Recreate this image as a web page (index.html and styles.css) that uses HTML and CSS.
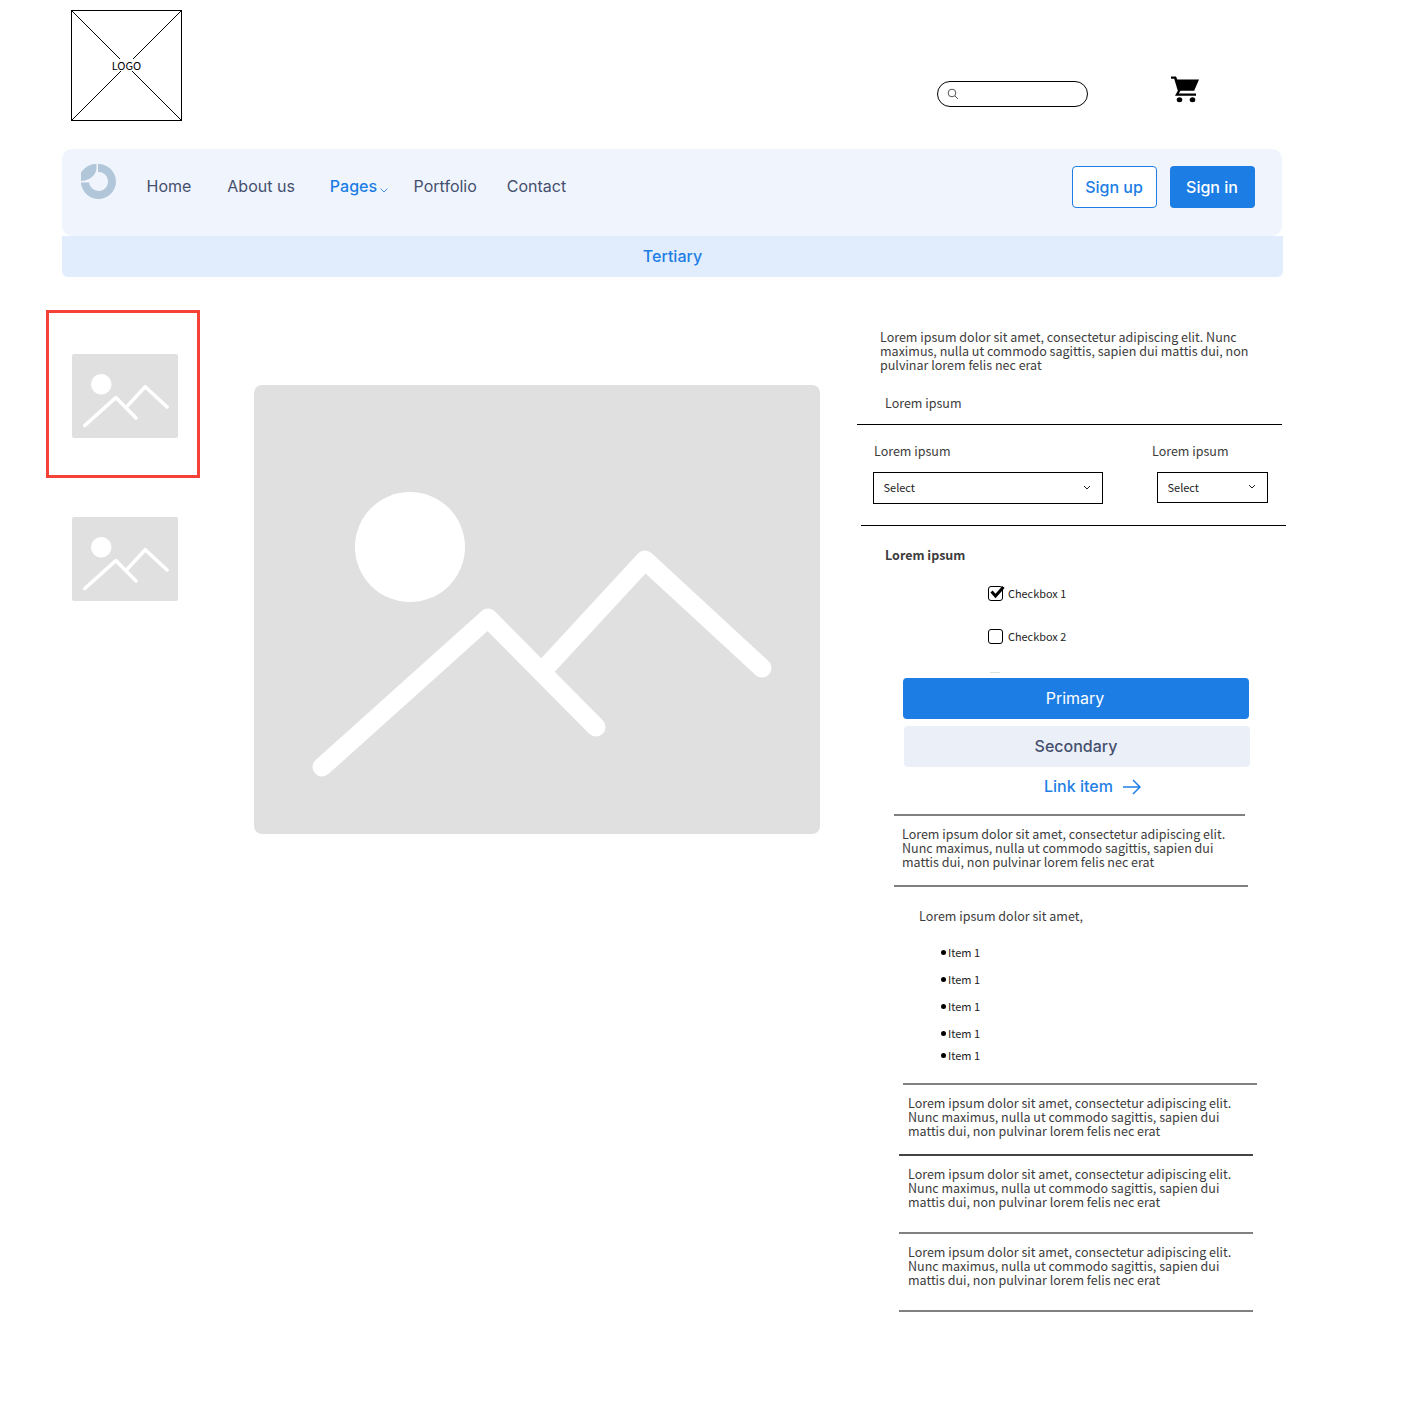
FILE: index.html
```html
<!DOCTYPE html>
<html lang="en">
<head>
  <meta charset="UTF-8">
  <title>Product page wireframe</title>
  <link rel="stylesheet" href="styles.css">
</head>
<body>

<svg class="defs" width="0" height="0">
  <symbol id="placeholder" viewBox="0 0 566 449">
    <circle cx="156" cy="162" r="55" fill="#fff"/>
    <path d="M68 382L234 233L342 342M294 280L391 175L508 283" fill="none" stroke="#fff" stroke-width="19" stroke-linecap="round" stroke-linejoin="round"/>
  </symbol>
</svg>

<header class="top">
  <div class="logo-box">
    <svg class="logo-cross" viewBox="0 0 110 110" preserveAspectRatio="none">
      <path d="M0 0L110 110M110 0L0 110" stroke="#000" stroke-width="1" fill="none"/>
    </svg>
    <span class="logo-text">LOGO</span>
  </div>
  <div class="search">
    <svg class="search-icon" viewBox="0 0 12 12">
      <circle cx="5" cy="5" r="3.8" fill="none" stroke="#555" stroke-width="1"/>
      <path d="M8 8L11 11" stroke="#555" stroke-width="1"/>
    </svg>
  </div>
  <svg class="cart" viewBox="0 0 28 30" preserveAspectRatio="none">
    <path d="M0 0.500H5L6.300 4H28L23.200 16.500H9.500L7.800 19.500H25V22H4L6.800 16.500L3.200 3H0Z" fill="#000"/>
    <circle cx="8.500" cy="26.500" r="2.800" fill="#000"/>
    <circle cx="21.500" cy="26.500" r="2.800" fill="#000"/>
  </svg>
</header>

<nav class="navbar">
  <svg class="nav-logo" viewBox="0.500 0.500 35 35">
    <path d="M17.500 0.500A17.500 17.500 0 1 1 0.500 19H8.600A9.500 9.500 0 1 0 17.500 8.500Z" fill="#b2c6da"/>
    <path d="M16 0.500V4.500C15.500 11 11 16.500 0.500 17.500V9C2 7 5 3.500 9 1.800C11 1 13.500 0.500 16 0.500Z" fill="#b2c6da"/>
  </svg>
  <a class="nav-link nav-home">Home</a>
  <a class="nav-link nav-about">About us</a>
  <a class="nav-link nav-pages">Pages</a>
  <svg class="nav-caret" viewBox="0 0 8 5"><path d="M0.500 0.500L4 4L7.500 0.500" fill="none" stroke="#1c7de4" stroke-width="0.800"/></svg>
  <a class="nav-link nav-portfolio">Portfolio</a>
  <a class="nav-link">Contact</a>
  <div class="nav-actions">
    <button class="btn-signup">Sign up</button>
    <button class="btn-signin">Sign in</button>
  </div>
</nav>
<div class="tertiary">Tertiary</div>

<main class="main">
  <div class="thumbs">
    <div class="thumb-active">
      <svg class="thumb-img"><use href="#placeholder"/></svg>
    </div>
    <svg class="thumb-img thumb-second"><use href="#placeholder"/></svg>
  </div>

  <svg class="hero-img"><use href="#placeholder"/></svg>

  <section class="details">
    <p class="txt intro">Lorem ipsum dolor sit amet, consectetur adipiscing elit. Nunc maximus, nulla ut commodo sagittis, sapien dui mattis dui, non pulvinar lorem felis nec erat</p>
    <p class="txt price">Lorem ipsum</p>
    <hr class="rule-black rule-a">

    <div class="selects">
      <div class="field field-wide">
        <label class="txt">Lorem ipsum</label>
        <div class="select select-wide">Select
          <svg class="chev" viewBox="0 0 8 5"><path d="M1 1L4 4L7 1" fill="none" stroke="#222" stroke-width="1"/></svg>
        </div>
      </div>
      <div class="field field-narrow">
        <label class="txt">Lorem ipsum</label>
        <div class="select select-narrow">Select
          <svg class="chev" viewBox="0 0 8 5"><path d="M1 1L4 4L7 1" fill="none" stroke="#222" stroke-width="1"/></svg>
        </div>
      </div>
    </div>
    <hr class="rule-black rule-b">

    <p class="txt heading">Lorem ipsum</p>
    <div class="check check-one">
      <span class="box">
        <svg class="tick" viewBox="0 0 16 14"><path d="M2.500 6.500L6.500 11L14.500 2" fill="none" stroke="#000" stroke-width="3"/></svg>
      </span>
      Checkbox 1
    </div>
    <div class="check check-two"><span class="box"></span>Checkbox 2</div>
    <div class="tick-mark"></div>

    <button class="btn-primary">Primary</button>
    <button class="btn-secondary">Secondary</button>
    <a class="link-item">Link item
      <svg class="arrow" viewBox="0 0 18 16"><path d="M0 8H17M10 1L17 8L10 15" fill="none" stroke="#1f7fe5" stroke-width="1.500"/></svg>
    </a>

    <hr class="rule-grey rule-c">
    <p class="txt block block-c">Lorem ipsum dolor sit amet, consectetur adipiscing elit. Nunc maximus, nulla ut commodo sagittis, sapien dui mattis dui, non pulvinar lorem felis nec erat</p>
    <hr class="rule-grey rule-d">

    <p class="txt list-title">Lorem ipsum dolor sit amet,</p>
    <ul class="items">
      <li>Item 1</li>
      <li>Item 1</li>
      <li>Item 1</li>
      <li class="item-short">Item 1</li>
      <li>Item 1</li>
    </ul>

    <hr class="rule-grey rule-e">
    <p class="txt block block-e">Lorem ipsum dolor sit amet, consectetur adipiscing elit. Nunc maximus, nulla ut commodo sagittis, sapien dui mattis dui, non pulvinar lorem felis nec erat</p>
    <hr class="rule-dark rule-f">
    <p class="txt block block-f">Lorem ipsum dolor sit amet, consectetur adipiscing elit. Nunc maximus, nulla ut commodo sagittis, sapien dui mattis dui, non pulvinar lorem felis nec erat</p>
    <hr class="rule-grey rule-g">
    <p class="txt block block-f">Lorem ipsum dolor sit amet, consectetur adipiscing elit. Nunc maximus, nulla ut commodo sagittis, sapien dui mattis dui, non pulvinar lorem felis nec erat</p>
    <hr class="rule-grey rule-g">
  </section>
</main>

</body>
</html>
```

FILE: styles.css
```css
* {
  box-sizing: border-box;
}

body {
  margin: 0;
  background: #fff;
  font-family: "Noto Sans CJK SC", "Noto Sans", sans-serif;
  color: #333;
  min-height: 1418px;
}

.defs {
  display: block;
  height: 0;
}

/* top strip */
.top {
  display: flex;
  height: 149px;
  padding: 10px 0 0 71px;
}

.logo-box {
  position: relative;
  display: flex;
  align-items: center;
  justify-content: center;
  width: 111px;
  height: 111px;
  border: 1px solid #000;
}

.logo-cross {
  position: absolute;
  inset: 0;
  width: 100%;
  height: 100%;
}

.logo-text {
  position: relative;
  margin-top: -2px;
  padding: 0 1px;
  background: #fff;
  color: #000;
  font-size: 11px;
  line-height: 12px;
}

.search {
  display: flex;
  align-items: center;
  width: 151px;
  height: 26px;
  margin: 71px 0 0 755px;
  padding-left: 9px;
  border: 1px solid #000;
  border-radius: 13px;
}

.search-icon {
  width: 12px;
  height: 12px;
}

.cart {
  width: 28px;
  height: 27px;
  margin: 66px 0 0 83px;
}

/* nav */
.navbar {
  display: flex;
  align-items: flex-start;
  width: 1220px;
  height: 87px;
  margin-left: 62px;
  padding: 15px 27px 0 19px;
  background: #f0f5fd;
  border-radius: 10px;
}

.nav-logo {
  width: 35px;
  height: 35px;
  margin-right: 30.500px;
}

.nav-link {
  margin-top: 12px;
  color: #454f6e;
  font-family: Inter, sans-serif;
  font-size: 16px;
  line-height: 20px;
}

.nav-home { margin-right: 36px; }
.nav-about { margin-right: 35px; }
.nav-pages { color: #1c7de4; font-weight: 500; }
.nav-portfolio { margin-right: 30px; }

.nav-caret {
  width: 8px;
  height: 5px;
  margin: 24px 25.500px 0 3px;
}

.nav-actions {
  display: flex;
  gap: 13px;
  margin: 2px 0 0 auto;
}

.nav-actions button {
  height: 42px;
  border-radius: 4px;
  font-family: Inter, sans-serif;
  font-size: 16px;
  font-weight: 500;
}

.btn-signup {
  width: 85px;
  padding: 0 1px 0 0;
  background: #fff;
  border: 1px solid #1c7de4;
  color: #1c7de4;
}

.btn-signin {
  width: 85px;
  padding: 0 1px 0 0;
  background: #1c7de4;
  border: none;
  color: #fff;
}

.tertiary {
  width: 1221px;
  height: 41px;
  margin-left: 62px;
  background: #e1edfd;
  border-radius: 0 0 6px 6px;
  color: #1c7de4;
  font-family: Inter, sans-serif;
  font-size: 16px;
  font-weight: 500;
  line-height: 41px;
  text-align: center;
}

/* main area */
.main {
  display: flex;
  align-items: flex-start;
  padding: 33px 0 0 46px;
}

.thumbs {
  display: flex;
  flex-direction: column;
  width: 154px;
}

.thumb-active {
  width: 154px;
  height: 168px;
  padding: 41px 0 0 23px;
  border: 3px solid #f44336;
}

.thumb-img {
  display: block;
  width: 106px;
  height: 84px;
  background: #e0e0e0;
  border-radius: 2px;
}

.thumb-second {
  margin: 39px 0 0 26px;
}

.hero-img {
  display: block;
  flex: none;
  width: 566px;
  height: 449px;
  margin: 75px 0 0 54px;
  background: #e0e0e0;
  border-radius: 8px;
}

.details {
  flex: none;
  width: 440px;
  margin-left: 37px;
  padding-top: 20px;
}

.txt {
  margin: 0;
  color: #3c3c3c;
  font-size: 12.530px;
  line-height: 14px;
}

.intro {
  width: 375px;
  margin-left: 23px;
}

.price {
  margin: 24px 0 0 28px;
}

hr {
  height: 0;
  margin: 0;
  border: none;
}

.rule-black { border-top: 1px solid #000; }
.rule-grey { border-top: 2px solid #808080; }
.rule-dark { border-top: 2px solid #444; }

.rule-a { width: 425px; margin-top: 14px; }
.rule-b { width: 425px; margin: 21px 0 0 4px; }

.selects {
  display: flex;
  padding: 19px 0 0 16px;
}

.field-wide { width: 278px; }
.field-narrow { width: 116px; }

.field label {
  display: block;
  margin-left: 1px;
}

.select {
  display: flex;
  align-items: center;
  justify-content: space-between;
  margin-top: 14px;
  padding: 0 11px 2px 9.500px;
  border: 1px solid #000;
  color: #222;
  font-size: 11px;
}

.select-wide {
  width: 230px;
  height: 32px;
}

.select-narrow {
  width: 111px;
  height: 31px;
  margin-left: 6px;
}

.chev {
  width: 8px;
  height: 5px;
}

.heading {
  margin: 22px 0 0 28px;
  font-weight: 700;
}

.check {
  display: flex;
  align-items: center;
  gap: 5px;
  height: 15px;
  margin-left: 131px;
  padding-bottom: 2px;
  color: #222;
  font-size: 10.900px;
}

.check-one { margin-top: 24px; }
.check-two { margin-top: 28px; }

.box {
  position: relative;
  width: 15px;
  height: 15px;
  margin-bottom: -2px;
  border: 1.500px solid #000;
  border-radius: 3px;
}

.tick {
  position: absolute;
  left: 0;
  top: -2px;
  width: 16px;
  height: 14px;
}

.tick-mark {
  width: 10px;
  height: 1px;
  margin: 28px 0 0 133px;
  background: #e0e0e0;
}

.btn-primary,
.btn-secondary {
  display: block;
  width: 346px;
  height: 41px;
  padding: 0 2px 2px 0;
  border: none;
  border-radius: 4px;
  font-family: Inter, sans-serif;
  font-size: 16px;
}

.btn-primary {
  margin: 5px 0 0 46px;
  background: #1c7de4;
  color: #fff;
}

.btn-secondary {
  margin: 7px 0 0 47px;
  background: #ebf0f8;
  color: #454f6e;
  font-weight: 500;
}

.link-item {
  display: flex;
  align-items: center;
  gap: 10px;
  height: 20px;
  margin: 9px 0 0 187px;
  color: #1f7fe5;
  font-family: Inter, sans-serif;
  font-size: 16px;
  font-weight: 500;
}

.arrow {
  width: 18px;
  height: 16px;
  margin-top: 2px;
}

.rule-c { width: 351px; margin: 18px 0 0 37px; }
.rule-d { width: 354px; margin: 16px 0 0 37px; }
.rule-e { width: 354px; margin: 8px 0 0 46px; }
.rule-f { width: 354px; margin: 16px 0 0 42px; }
.rule-g { width: 354px; margin: 23px 0 0 42px; }

.block { width: 345px; }
.block-c { margin: 11px 0 0 45px; }
.block-e { margin: 11px 0 0 51px; }
.block-f { margin: 11px 0 0 51px; }

.list-title {
  margin: 22px 0 0 62px;
}

.items {
  margin: 22px 0 0 91px;
  padding: 0;
  list-style: none;
}

.items li {
  position: relative;
  height: 27px;
  color: #222;
  font-size: 11px;
  line-height: 14px;
}

.items .item-short {
  height: 22px;
}

.items li::before {
  content: "";
  position: absolute;
  left: -7px;
  top: 5px;
  width: 5px;
  height: 5px;
  background: #000;
  border-radius: 50%;
}
```
